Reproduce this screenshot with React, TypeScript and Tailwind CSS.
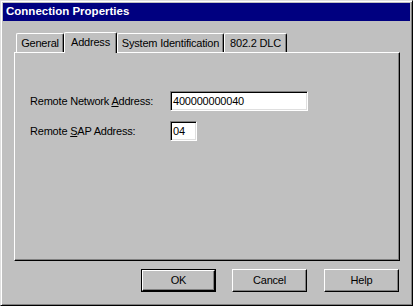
import React from 'react';

const tabs = [
  { label: 'General', width: 'w-[48px]' },
  { label: 'Address', width: 'w-[53px]', active: true },
  { label: 'System Identification', width: 'w-[107px]' },
  { label: '802.2 DLC', width: 'w-[63px]' },
];

function Tab({ label, width, active }: { label: string; width: string; active?: boolean }) {
  if (active) {
    return (
      <div
        className={`${width} relative z-10 -mb-px h-[21px] bg-[#c0c0c0] border-t border-l border-r border-t-white border-l-white border-r-black rounded-t-[2px] shadow-[inset_-1px_0_#808080] flex items-start justify-center pt-[4px]`}
      >
        {label}
      </div>
    );
  }
  return (
    <div
      className={`${width} h-[19px] border-t border-l border-r border-t-white border-l-white border-r-black rounded-t-[2px] shadow-[inset_-1px_0_#808080] flex items-start justify-center pt-[4px]`}
    >
      {label}
    </div>
  );
}

function Field({ value, width }: { value: string; width: string }) {
  return (
    <div
      className={`${width} h-[20px] bg-white border border-t-[#808080] border-l-[#808080] border-r-white border-b-white shadow-[inset_1px_1px_#000,inset_-1px_-1px_#dfdfdf] flex items-center pl-[2px]`}
    >
      {value}
    </div>
  );
}

function Button({ children, isDefault }: { children: React.ReactNode; isDefault?: boolean }) {
  if (isDefault) {
    return (
      <div className="w-[75px] h-[23px] border border-black">
        <div className="w-full h-full border border-t-white border-l-white border-r-black border-b-black shadow-[inset_-1px_-1px_#808080] flex items-center justify-center">
          {children}
        </div>
      </div>
    );
  }
  return (
    <div className="w-[75px] h-[23px] border border-t-white border-l-white border-r-black border-b-black shadow-[inset_-1px_-1px_#808080] flex items-center justify-center">
      {children}
    </div>
  );
}

export default function App() {
  return (
    <div className="w-[413px] h-[306px] bg-[#c0c0c0] text-black text-[11px] leading-none tracking-[-0.2px] font-['Liberation_Sans',Arial,sans-serif] border border-t-[#dfdfdf] border-l-[#dfdfdf] border-r-black border-b-black shadow-[inset_1px_1px_#fff,inset_-1px_-1px_#808080] p-[2px] flex flex-col">
      {/* Title bar */}
      <div className="h-[18px] bg-[#000080] text-white font-bold text-[11.5px] tracking-normal flex items-center pl-[3px]">
        Connection Properties
      </div>

      {/* Tabs */}
      <div className="mt-[11px] ml-[13px] h-[20px] flex items-end">
        {tabs.map((t) => (
          <Tab key={t.label} {...t} />
        ))}
      </div>

      {/* Panel */}
      <div className="ml-[11px] w-[386px] h-[209px] border border-t-white border-l-white border-r-black border-b-black shadow-[inset_-1px_-1px_#808080] pt-[38px] pl-[15px] flex flex-col gap-[10px]">
        <div className="flex items-center">
          <div className="w-[140px] pt-px">
            Remote Network <span className="underline">A</span>ddress:
          </div>
          <Field value="400000000040" width="w-[138px]" />
        </div>
        <div className="flex items-center">
          <div className="w-[140px] pt-px">
            Remote <span className="underline">S</span>AP Address:
          </div>
          <Field value="04" width="w-[27px]" />
        </div>
      </div>

      {/* Buttons */}
      <div className="mt-[8px] mr-[11px] flex justify-end">
        <Button isDefault>OK</Button>
        <div className="ml-[16px]">
          <Button>Cancel</Button>
        </div>
        <div className="ml-[17px]">
          <Button>Help</Button>
        </div>
      </div>
    </div>
  );
}
